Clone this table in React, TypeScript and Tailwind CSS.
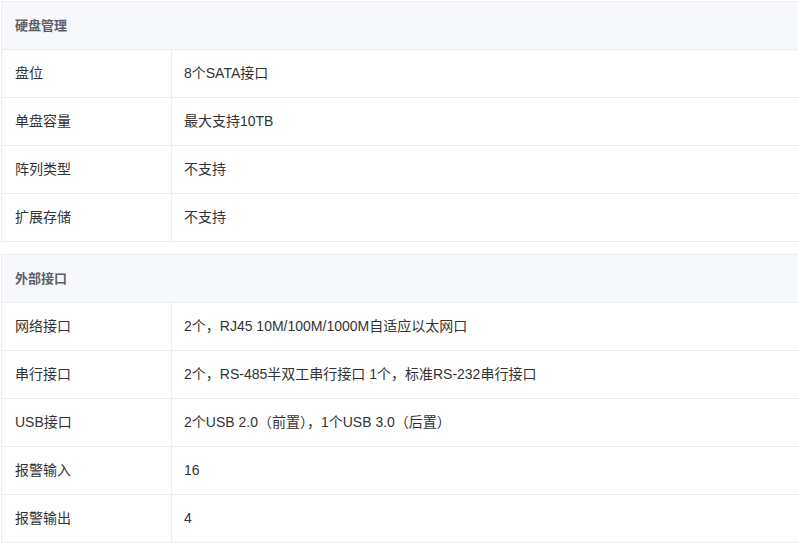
const groups = [
  {
    title: "硬盘管理",
    rows: [
      ["盘位", "8个SATA接口"],
      ["单盘容量", "最大支持10TB"],
      ["阵列类型", "不支持"],
      ["扩展存储", "不支持"],
    ],
  },
  {
    title: "外部接口",
    rows: [
      ["网络接口", "2个，RJ45 10M/100M/1000M自适应以太网口"],
      ["串行接口", "2个，RS-485半双工串行接口 1个，标准RS-232串行接口"],
      ["USB接口", "2个USB 2.0（前置），1个USB 3.0（后置）"],
      ["报警输入", "16"],
      ["报警输出", "4"],
    ],
  },
];

export default function App() {
  return (
    <div
      className="w-[798px] h-[543px] overflow-hidden bg-white pl-[1px] pt-[1px] flex flex-col gap-[12px] text-[14px] text-[#333]"
      style={{ fontFamily: '"Liberation Sans", "Noto Sans CJK SC", sans-serif' }}
    >
      {groups.map((g) => (
        <div key={g.title} className="border-l border-t border-[#ebedf3] w-[800px]">
          <div className="h-[48px] flex items-center pl-[13px] bg-[#f7f8fc] border-b border-[#ebedf3] font-bold text-[13px] text-[#5b5f6b]">
            {g.title}
          </div>
          {g.rows.map(([k, v]) => (
            <div key={k} className="h-[48px] flex border-b border-[#ebedf3]">
              <div className="w-[170px] shrink-0 flex items-center pl-[13px] border-r border-[#ebedf3]">
                {k}
              </div>
              <div className="flex items-center pl-[12px]">{v}</div>
            </div>
          ))}
        </div>
      ))}
    </div>
  );
}
